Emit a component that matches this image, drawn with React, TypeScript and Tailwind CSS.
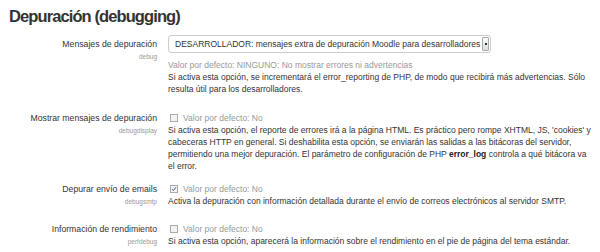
import React from "react";

const font = { fontFamily: '"Liberation Sans", Arial, sans-serif' };

function Label({ title, name }: { title: string; name: string }) {
  return (
    <div className="w-[157px] shrink-0 text-right">
      <div className="text-[8.7px] leading-[12px] text-[#333]">{title}</div>
      <div className="mt-[1px] text-[6.5px] leading-[12px] text-[#999]">{name}</div>
    </div>
  );
}

function Checkbox({ checked }: { checked?: boolean }) {
  return (
    <span className="ml-[2px] mr-[5px] inline-flex h-[8px] w-[8px] items-center justify-center border border-[#aaa] bg-[#f3f3f3]">
      {checked && (
        <svg width="6" height="6" viewBox="0 0 6 6">
          <path d="M1 3.2 L2.4 4.6 L5 1.2" stroke="#3a5d9c" strokeWidth="1" fill="none" />
        </svg>
      )}
    </span>
  );
}

export default function App() {
  return (
    <div className="h-[252px] w-[600px] overflow-hidden bg-white text-[#333]" style={font}>
      <h2 className="pl-[9px] pt-[5px] text-[16.5px] font-bold leading-[22px] tracking-[-0.9px] text-[#333]">Depuración (debugging)</h2>
      <div className="mt-[11px] flex gap-[11px]">
        <Label title="Mensajes de depuración" name="debug" />
        <div className="flex-1 pr-[8px]">
          <div className="-mt-[3px] flex h-[18px] w-[323px] items-center justify-between rounded-[3px] border border-[#ccc] bg-white pl-[6px] pr-[1px]">
            <span className="whitespace-nowrap text-[8.5px] text-[#333]">DESARROLLADOR: mensajes extra de depuración Moodle para desarrolladores</span>
            <span className="flex h-[14px] w-[7px] items-center justify-center rounded-[1px] border border-[#aaa] bg-gradient-to-b from-[#fafafa] to-[#ddd]">
              <span className="h-[2px] w-[2px] bg-[#333]" />
            </span>
          </div>
          <div className="mt-[6px] text-[8.5px] leading-[12px] text-[#999]">Valor por defecto: NINGUNO: No mostrar errores ni advertencias</div>
          <div className="text-[8.5px] leading-[12px] text-[#333]">
            Si activa esta opción, se incrementará el error_reporting de PHP, de modo que recibirá más advertencias. Sólo resulta útil para los desarrolladores.
          </div>
        </div>
      </div>

      <div className="mt-[17px] flex gap-[11px]">
        <Label title="Mostrar mensajes de depuración" name="debugdisplay" />
        <div className="flex-1 pr-[8px]">
          <div className="flex items-center text-[8.5px] leading-[12px] text-[#999]"><Checkbox />Valor por defecto: No</div>
          <div className="text-[8.5px] leading-[12px] text-[#333]">
            Si activa esta opción, el reporte de errores irá a la página HTML. Es práctico pero rompe XHTML, JS, 'cookies' y cabeceras HTTP en general. Si deshabilita esta opción, se enviarán las salidas a las bitácoras del servidor, permitiendo una mejor depuración. El parámetro de configuración de PHP <b className="text-[#222]">error_log</b> controla a qué bitácora va el error.
          </div>
        </div>
      </div>

      <div className="mt-[11px] flex gap-[11px]">
        <Label title="Depurar envío de emails" name="debugsmtp" />
        <div className="flex-1 pr-[8px]">
          <div className="flex items-center text-[8.5px] leading-[12px] text-[#999]"><Checkbox checked />Valor por defecto: No</div>
          <div className="text-[8.5px] leading-[12px] text-[#333]">
            Activa la depuración con información detallada durante el envío de correos electrónicos al servidor SMTP.
          </div>
        </div>
      </div>

      <div className="mt-[15px] flex gap-[11px]">
        <Label title="Información de rendimiento" name="perfdebug" />
        <div className="flex-1 pr-[8px]">
          <div className="flex items-center text-[8.5px] leading-[12px] text-[#999]"><Checkbox />Valor por defecto: No</div>
          <div className="text-[8.5px] leading-[12px] text-[#333]">
            Si activa esta opción, aparecerá la información sobre el rendimiento en el pie de página del tema estándar.
          </div>
        </div>
      </div>
    </div>
  );
}
